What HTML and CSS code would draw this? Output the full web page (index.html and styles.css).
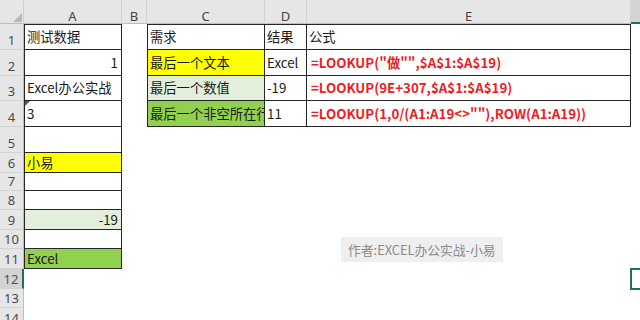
FILE: index.html
```html
<!DOCTYPE html>
<html lang="zh-CN">
<head>
<meta charset="utf-8">
<link rel="stylesheet" href="styles.css">
</head>
<body>
<div class="sheet">
  <div class="corner"><svg width="24" height="24" viewBox="0 0 24 24"><polygon points="22,13 22,22 13,22" fill="#b8b8b8"/></svg></div>
  <div class="ch">A</div><div class="ch">B</div><div class="ch">C</div><div class="ch">D</div><div class="ch">E</div><div class="ch sel">F</div>

  <div class="rh">1</div><div class="c bx bl bt">测试数据</div><div class="c"></div><div class="c bx bl bt">需求</div><div class="c bx bt">结果</div><div class="c bx bt">公式</div><div class="c"></div>

  <div class="rh">2</div><div class="c bx bl num">1</div><div class="c"></div><div class="c bx bl yel">最后一个文本</div><div class="c bx">Excel</div><div class="c bx f">=LOOKUP("做"",$A$1:$A$19)</div><div class="c"></div>

  <div class="rh">3</div><div class="c bx bl">Excel办公实战</div><div class="c"></div><div class="c bx bl lgr">最后一个数值</div><div class="c bx">-19</div><div class="c bx f">=LOOKUP(9E+307,$A$1:$A$19)</div><div class="c"></div>

  <div class="rh">4</div><div class="c bx bl tri">3</div><div class="c"></div><div class="c bx bl gr">最后一个非空所在行</div><div class="c bx">11</div><div class="c bx f">=LOOKUP(1,0/(A1:A19&lt;&gt;""),ROW(A1:A19))</div><div class="c"></div>

  <div class="rh">5</div><div class="c bx bl"></div><div class="c"></div><div class="c"></div><div class="c"></div><div class="c"></div><div class="c"></div>

  <div class="rh">6</div><div class="c bx bl yel">小易</div><div class="c"></div><div class="c"></div><div class="c"></div><div class="c"></div><div class="c"></div>

  <div class="rh">7</div><div class="c bx bl"></div><div class="c"></div><div class="c"></div><div class="c"></div><div class="c"></div><div class="c"></div>

  <div class="rh">8</div><div class="c bx bl"></div><div class="c"></div><div class="c"></div><div class="c"></div><div class="c"></div><div class="c"></div>

  <div class="rh">9</div><div class="c bx bl lgr num">-19</div><div class="c"></div><div class="c"></div><div class="c"></div><div class="c"></div><div class="c"></div>

  <div class="rh">10</div><div class="c bx bl"></div><div class="c"></div><div class="c"></div><div class="c"></div><div class="c"></div><div class="c"></div>

  <div class="rh">11</div><div class="c bx bl gr">Excel</div><div class="c"></div><div class="c"></div><div class="c"></div><div class="c"></div><div class="c"></div>

  <div class="rh sel">12</div><div class="c"></div><div class="c"></div><div class="c"></div><div class="c"></div><div class="c"></div><div class="c active"></div>

  <div class="rh">13</div><div class="c"></div><div class="c"></div><div class="c"></div><div class="c"></div><div class="c"></div><div class="c"></div>

  <div class="rh">14</div><div class="c"></div><div class="c"></div><div class="c"></div><div class="c"></div><div class="c"></div><div class="c"></div>

  <div class="mark">作者:EXCEL办公实战-小易</div>
</div>
</body>
</html>
```
FILE: styles.css
```css
html, body {
  margin: 0;
  padding: 0;
  background: #ffffff;
  overflow: hidden;
}

body {
  width: 640px;
  height: 320px;
  font-family: "Noto Sans CJK SC", "Noto Sans", sans-serif;
}

.sheet {
  position: relative;
  display: grid;
  grid-template-columns: 24px 98px 25px 118px 42px 324px 72px;
  grid-template-rows: 24px 26px 26px 25px 26px 26px 20px 18px 19px 20px 19px 20px 20px 19px 20px;
  width: 729px;
}

.corner {
  background: #e6e6e6;
  border-right: 1px solid #cfcfcf;
  border-bottom: 1px solid #bdbdbd;
  box-sizing: border-box;
}

.corner svg {
  display: block;
}

.ch {
  background: #e6e6e6;
  border-right: 1px solid #d2d2d2;
  border-bottom: 1px solid #bdbdbd;
  box-sizing: border-box;
  display: flex;
  align-items: flex-end;
  justify-content: center;
  color: #444444;
  font-family: "Noto Sans", sans-serif;
  font-size: 13px;
  line-height: 14px;
}

.ch.sel {
  background: #d3d3d3;
  border-bottom: 2px solid #217346;
}

.rh {
  background: #e6e6e6;
  border-right: 1px solid #bdbdbd;
  border-bottom: 1px solid #d2d2d2;
  box-sizing: border-box;
  display: flex;
  align-items: flex-end;
  justify-content: center;
  padding-bottom: 2px;
  color: #4a4a4a;
  font-family: "Noto Sans", sans-serif;
  font-size: 13px;
  line-height: 13px;
}

.rh.sel {
  background: #d3d3d3;
  border-right: 2px solid #217346;
  color: #555555;
}

.c {
  position: relative;
  box-sizing: border-box;
  min-width: 0;
  display: flex;
  align-items: center;
  padding: 0 3px 0 2px;
  font-size: 13.3px;
  line-height: 18px;
  color: #1a1a1a;
  white-space: nowrap;
  overflow: hidden;
}

.bx {
  border-right: 1px solid #262626;
  border-bottom: 1px solid #262626;
}

.bl {
  border-left: 1px solid #262626;
}

.bt {
  border-top: 1px solid #262626;
}

.num {
  justify-content: flex-end;
}

.yel {
  background: #ffff00;
}

.lgr {
  background: #e2efda;
}

.gr {
  background: #92d050;
}

.f {
  color: #ee1c25;
  font-weight: 700;
  padding-left: 4px;
}

.tri::before {
  content: "";
  position: absolute;
  left: 0;
  top: 0;
  border-top: 5px solid #1f7a3c;
  border-right: 5px solid transparent;
}

.active {
  overflow: visible;
  box-shadow: 0 0 0 1px #217346, inset 0 0 0 1px #217346;
}

.mark {
  position: absolute;
  left: 341px;
  top: 237px;
  height: 25px;
  display: flex;
  align-items: center;
  padding: 0 7px;
  background: #efefef;
  color: #8a8a8a;
  font-size: 12.8px;
  white-space: nowrap;
}
```
